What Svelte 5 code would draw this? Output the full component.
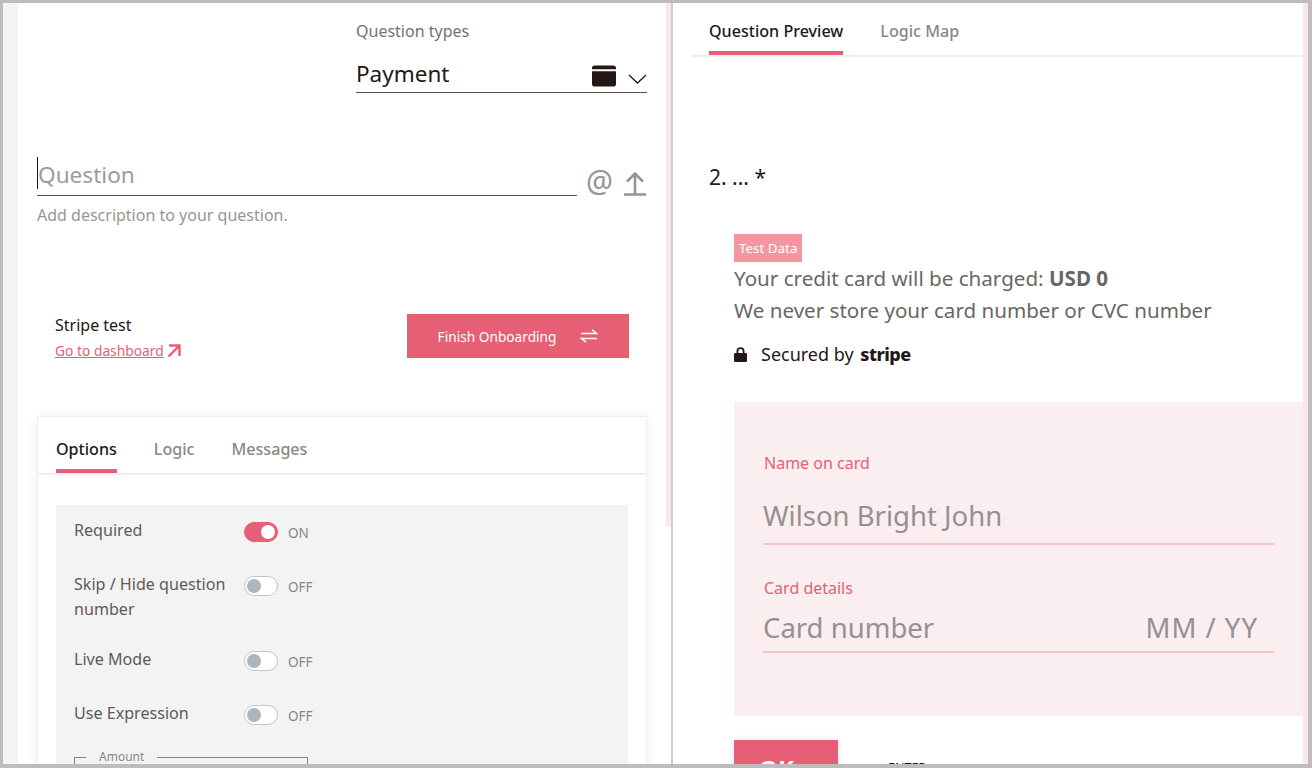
<script>
  const leftTabs = ['Options', 'Logic', 'Messages'];
  const settings = [
    { label: 'Required', on: true, cls: 'required' },
    { label: 'Skip / Hide question number', on: false, cls: 'skip' },
    { label: 'Live Mode', on: false, cls: 'live' },
    { label: 'Use Expression', on: false, cls: 'expr' },
  ];
</script>

<div class="frame">
  <div class="gutter"></div>

  <section class="builder">
    <div class="type-select">
      <div class="type-label">Question types</div>
      <div class="type-row">
        <span class="type-value">Payment</span>
        <svg class="card-icon" width="24" height="22" viewBox="0 0 25 22">
          <path d="M3 0h19a3 3 0 0 1 3 3v1H0V3a3 3 0 0 1 3-3zM0 6h25v13a3 3 0 0 1-3 3H3a3 3 0 0 1-3-3z" fill="#231815" />
        </svg>
        <svg class="chevron" width="19" height="10" viewBox="0 0 19 10">
          <path d="M1 1l8.500 8L18 1" fill="none" stroke="#231815" stroke-width="1.300" />
        </svg>
      </div>
    </div>

    <div class="question-row">
      <div class="question-input"><span class="caret"></span><span class="question-text">Question</span></div>
      <span class="at">@</span>
      <svg class="upload" width="22" height="25" viewBox="0 0 22 25">
        <path d="M11 23V2.500M3 10.500l8-8 8 8M0 23.500h22" fill="none" stroke="#999490" stroke-width="2.600" />
      </svg>
    </div>
    <div class="description">Add description to your question.</div>

    <div class="stripe-row">
      <div class="stripe-info">
        <div class="stripe-name">Stripe test</div>
        <a class="dashboard" href="#dashboard">Go to dashboard<svg width="14" height="13" viewBox="0 0 14 13">
            <path d="M2 1.500h10.500V12M12 2L1.500 12.500" fill="none" stroke="#e75f75" stroke-width="2.400" />
          </svg></a>
      </div>
      <button class="finish">
        Finish Onboarding
        <svg width="18" height="14" viewBox="0 0 18 14">
          <path d="M1 4.500h15.500L12 .8M17 9.500H1.500L6 13.200" fill="none" stroke="#fff" stroke-width="1.600" />
        </svg>
      </button>
    </div>

    <div class="options-card">
      <div class="card-tabs">
        {#each leftTabs as tab, i}
          <span class="card-tab" class:active={i === 0}>{tab}</span>
        {/each}
      </div>
      <div class="settings">
        {#each settings as s}
          <div class="setting {s.cls}">
            <div class="setting-label">{s.label}</div>
            <span class="switch" class:on={s.on}><span class="knob"></span></span>
            <span class="state">{s.on ? 'ON' : 'OFF'}</span>
          </div>
        {/each}
        <fieldset class="amount"><legend>Amount</legend></fieldset>
      </div>
    </div>
  </section>

  <div class="left-scroll"><div class="left-thumb"></div></div>

  <section class="preview">
    <div class="preview-tabs">
      <span class="preview-tab active">Question Preview</span>
      <span class="preview-tab">Logic Map</span>
    </div>

    <div class="question-title">2. ... *</div>

    <div class="payment">
      <span class="test-badge">Test Data</span>
      <div class="charge">Your credit card will be charged: <b>USD 0</b></div>
      <div class="charge">We never store your card number or CVC number</div>
      <div class="secured">
        <svg width="13" height="15" viewBox="0 0 13 15">
          <path d="M2.500 6V4.200a4 4 0 0 1 8 0V6h1.200A1.300 1.300 0 0 1 13 7.300V13.700A1.300 1.300 0 0 1 11.700 15H1.300A1.300 1.300 0 0 1 0 13.700V7.300A1.300 1.300 0 0 1 1.300 6zM4.300 6h4.400V4.200a2.200 2.200 0 0 0-4.400 0z" fill="#231815" />
        </svg>
        <span>Secured by <b class="stripe-word">stripe</b></span>
      </div>

      <div class="card-form">
        <div class="field-label">Name on card</div>
        <div class="field-value name">Wilson Bright John</div>
        <div class="field-label details">Card details</div>
        <div class="field-value card">
          <span>Card number</span>
          <span class="expiry">MM / YY</span>
        </div>
      </div>

      <div class="submit-row">
        <button class="ok">OK <span class="tick">✓</span></button>
        <span class="enter">ENTER</span>
      </div>
    </div>
  </section>

  <div class="right-scroll"></div>
</div>

<style>
  :global(body) {
    margin: 0;
    background: #fff;
  }

  .frame {
    display: flex;
    box-sizing: border-box;
    width: 1312px;
    height: 768px;
    overflow: hidden;
    border: solid #bdbdbd;
    border-width: 3px 4px 4px 3px;
    background: #fff;
    font-family: "Noto Sans", "Open Sans", sans-serif;
    color: #5f5a58;
  }

  .gutter {
    flex: 0 0 15px;
    background: #f4f4f4;
  }

  .builder {
    flex: 0 0 648px;
    box-sizing: border-box;
    padding: 0 19px 0 19px;
  }

  .type-select {
    margin-left: 319px;
    padding-top: 18px;
  }

  .type-label {
    font-size: 16px;
    line-height: 21px;
    color: #77716e;
  }

  .type-row {
    display: flex;
    align-items: center;
    height: 36px;
    margin-top: 14px;
    border-bottom: 1px solid #55504e;
  }

  .type-value {
    flex: 1;
    font-size: 22.500px;
    color: #231815;
    line-height: 30px;
  }

  .card-icon {
    margin: 4px 0 0;
  }

  .chevron {
    margin: 9px 0 0 12px;
  }

  .question-row {
    display: flex;
    align-items: flex-end;
    margin-top: 58px;
  }

  .question-input {
    flex: 0 0 540px;
    display: flex;
    align-items: center;
    height: 44px;
    border-bottom: 1px solid #55504e;
    font-size: 22.600px;
    color: #a09b98;
  }

  .question-text {
    margin-top: 2px;
  }

  .caret {
    width: 1px;
    height: 32px;
    background: #231815;
  }

  .at {
    width: 24px;
    margin-left: 9px;
    font-size: 30px;
    line-height: 30px;
    color: #999490;
  }

  .upload {
    margin: 0 0 0 14px;
  }

  .description {
    margin-top: 8px;
    font-size: 16px;
    line-height: 22px;
    color: #9a9592;
  }

  .stripe-row {
    display: flex;
    justify-content: space-between;
    align-items: center;
    margin-top: 88px;
    padding: 0 18px;
    height: 44px;
  }

  .stripe-info {
    margin-top: 2px;
  }

  .stripe-name {
    font-size: 16px;
    line-height: 22px;
    color: #231815;
  }

  .dashboard {
    display: inline-flex;
    align-items: center;
    gap: 3px;
    font-size: 13.800px;
    line-height: 20px;
    color: #e75f75;
    text-decoration: underline;
    margin-top: 5px;
  }

  .finish {
    display: flex;
    align-items: center;
    justify-content: center;
    gap: 24px;
    width: 222px;
    height: 44px;
    border: none;
    background: #e65f74;
    color: #fff;
    font: inherit;
    font-size: 13.700px;
  }

  .options-card {
    margin-top: 58px;
    height: 420px;
    border: 1px solid #eeeeee;
    box-shadow: 0 0 12px rgba(0, 0, 0, 0.06);
  }

  .card-tabs {
    display: flex;
    gap: 37px;
    height: 56px;
    padding-left: 18px;
    border-bottom: 2px solid #eeeeee;
  }

  .card-tab {
    height: 56px;
    box-sizing: border-box;
    padding-top: 20px;
    font-size: 16.100px;
    line-height: 24px;
    color: #8b8684;
    font-weight: 500;
  }

  .card-tab.active {
    color: #231815;
    border-bottom: 4px solid #e75f75;
  }

  .settings {
    margin: 30px 18px 0;
    height: 320px;
    padding: 13px 18px;
    background: #f3f3f3;
  }

  .setting {
    display: flex;
    align-items: flex-start;
    font-size: 16.100px;
    line-height: 25px;
  }

  .setting.required { height: 54px; }
  .setting.skip { height: 75px; }
  .setting.live { height: 54px; }
  .setting.expr { height: 48px; }

  .setting-label {
    flex: 0 0 170px;
  }

  .switch {
    position: relative;
    box-sizing: border-box;
    width: 34px;
    height: 20px;
    margin-top: 4px;
    border: 1px solid #c4c4c4;
    border-radius: 10px;
    background: #fff;
  }

  .switch.on {
    border-color: #e75f75;
    background: #e75f75;
  }

  .knob {
    position: absolute;
    top: 2px;
    left: 2px;
    width: 14px;
    height: 14px;
    border-radius: 50%;
    background: #adb5bd;
  }

  .on .knob {
    left: auto;
    right: 2px;
    background: #fff;
  }

  .state {
    margin: 3px 0 0 10px;
    font-size: 13.500px;
    color: #8b8684;
  }

  .amount {
    box-sizing: border-box;
    width: 234px;
    height: 40px;
    margin: 0;
    padding: 0 0 0 11px;
    border: 1px solid #8b8684;
  }

  .amount legend {
    padding: 0 13px;
    font-size: 12px;
    line-height: 16px;
    color: #8b8684;
  }

  .left-scroll {
    flex: 0 0 5px;
    background: #fff;
  }

  .left-thumb {
    height: 524px;
    border-radius: 0 0 3px 3px;
    background: #fbe6e9;
  }

  .preview {
    flex: 1;
    min-width: 0;
    border-left: 2px solid #d0cccc;
    box-sizing: border-box;
    padding-left: 18px;
    overflow: hidden;
  }

  .preview-tabs {
    display: flex;
    gap: 37px;
    height: 52px;
    padding-left: 18px;
    border-bottom: 2px solid #eeeeee;
  }

  .preview-tab {
    height: 52px;
    box-sizing: border-box;
    padding-top: 16px;
    font-size: 16.100px;
    line-height: 24px;
    color: #8b8684;
    font-weight: 500;
  }

  .preview-tab.active {
    color: #231815;
    border-bottom: 4px solid #e75f75;
  }

  .question-title {
    margin: 105px 0 0 18px;
    font-size: 21px;
    line-height: 30px;
    color: #231815;
  }

  .payment {
    margin: 42px 0 0 43px;
  }

  .test-badge {
    display: inline-block;
    padding: 0 5px;
    height: 28px;
    line-height: 28px;
    font-size: 13.400px;
    background: #f5959f;
    color: #fff;
    vertical-align: top;
  }

  .charge {
    font-size: 20.600px;
    line-height: 32px;
    color: #6b6664;
  }

  .charge b {
    font-weight: 700;
  }

  .secured {
    display: flex;
    align-items: center;
    gap: 14px;
    margin-top: 16px;
    font-size: 18px;
    line-height: 24px;
    color: #231815;
  }

  .stripe-word {
    font-weight: 800;
    margin-left: 2px;
    letter-spacing: -0.500px;
  }

  .card-form {
    box-sizing: border-box;
    height: 314px;
    margin-top: 36px;
    padding: 49px 30px 0;
    background: #fbeef0;
  }

  .field-label {
    font-size: 16px;
    line-height: 24px;
    color: #e75f75;
  }

  .field-label.details {
    margin-top: 31px;
  }

  .field-value {
    display: flex;
    justify-content: space-between;
    font-size: 27.500px;
    color: #9a8f90;
    border-bottom: 2px solid #f8c4cc;
    margin-left: -1px;
    padding: 0 16px 0 0;
    width: 495px;
  }

  .field-value.name {
    height: 57px;
    line-height: 60px;
    margin-top: 11px;
  }

  .field-value.card {
    height: 51px;
    line-height: 56px;
  }

  .expiry {
    letter-spacing: 1px;
  }

  .submit-row {
    display: flex;
    align-items: flex-start;
    margin-top: 24px;
  }

  .ok {
    width: 104px;
    height: 56px;
    border: none;
    background: #e65f74;
    color: #fff;
    font: inherit;
    font-size: 24px;
    font-weight: 700;
    box-shadow: 0 0 8px rgba(0, 0, 0, 0.1);
    text-align: center;
  }

  .tick {
    font-size: 16px;
  }

  .enter {
    margin: 19px 0 0 50px;
    font-size: 12.500px;
    color: #231815;
  }

  .right-scroll {
    flex: 0 0 5px;
    background: #fbe6e9;
  }
</style>
